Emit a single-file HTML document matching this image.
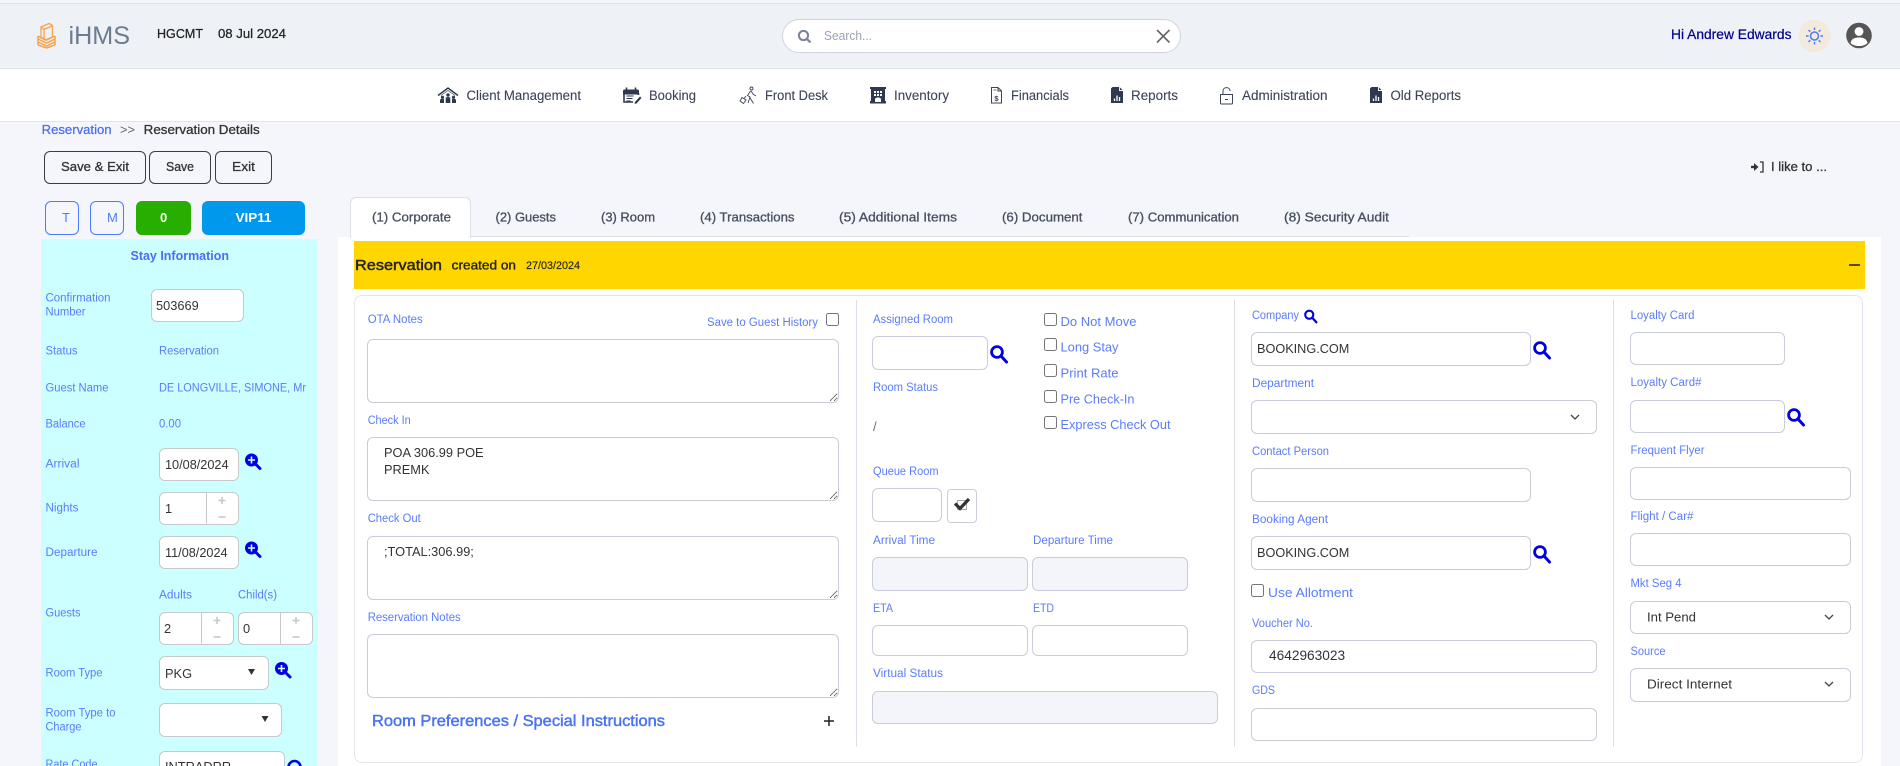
<!DOCTYPE html>
<html><head><meta charset="utf-8"><title>iHMS Reservation Details</title>
<style>
html,body{margin:0;padding:0;width:1900px;height:766px;overflow:hidden;background:#f5f6fb;font-family:"Liberation Sans",sans-serif}
#a{position:absolute;left:0;top:0;width:1900px;height:766px;overflow:hidden;background:#f5f6fb}
.b,input,textarea{position:absolute;box-sizing:border-box;margin:0}
input[type=text],textarea,.f{background:#fff;border:1px solid #c9ccda;border-radius:6px;font:12.8px "Liberation Sans",sans-serif;color:#333;outline:0}
input[type=text]{padding:0 4px}
textarea{padding:6px 16px;line-height:17px;overflow:hidden;resize:vertical}
.g{background:#f4f5fa!important}
.p{border-color:#c8c8c8!important}
.k{position:absolute;margin:0;width:13px;height:13px}
svg{position:absolute;left:0;top:0;pointer-events:none}
.l{font-size:11.5px;fill:#5a7cfb}
.c{font-size:13px;fill:#5a7cfb}
.n{font-size:13.5px;fill:#3c4458;stroke:#3c4458;stroke-width:.1px}
.tb{font-size:13px;fill:#474f60;stroke:#474f60;stroke-width:.3px}
.h{font-size:13px;fill:#222;stroke:#222;stroke-width:.25px}
.bt{font-size:13px;fill:#333;stroke:#333;stroke-width:.3px}
.w{font-size:13px;fill:#fff;font-weight:bold}
</style></head><body><div id="a">
<div class="b" style="left:0;top:3px;width:1900px;height:66px;background:#eef1f6;border-top:1px solid #e0e2e7;border-bottom:1px solid #e0e3e9"></div>
<div class="b" style="left:0;top:69px;width:1900px;height:53px;background:#fff;border-bottom:1px solid #e3e5ea"></div>
<div class="b" style="left:782px;top:19px;width:399px;height:34px;background:#fff;border:1px solid #cfd3e0;border-radius:17px"></div>

<div class="b" style="left:44px;top:151px;width:102px;height:33px;border:1px solid #3a3d45;border-radius:6px"></div>
<div class="b" style="left:149px;top:151px;width:62px;height:33px;border:1px solid #3a3d45;border-radius:6px"></div>
<div class="b" style="left:215px;top:151px;width:57px;height:33px;border:1px solid #3a3d45;border-radius:6px"></div>
<div class="b" style="left:45px;top:201px;width:34px;height:34px;border:1px solid #4a7cff;border-radius:6px"></div>
<div class="b" style="left:90px;top:201px;width:34px;height:34px;border:1px solid #4a7cff;border-radius:6px"></div>
<div class="b" style="left:136px;top:201px;width:55px;height:34px;background:#28ae00;border-radius:6px"></div>
<div class="b" style="left:202px;top:201px;width:103px;height:34px;background:#0098ec;border-radius:6px"></div>

<div class="b" style="left:41px;top:239px;width:277px;height:527px;background:#ccffff"></div>
<div class="b" style="left:338px;top:237px;width:1543px;height:529px;background:#fff"></div>
<div class="b" style="left:350px;top:236px;width:1059px;height:1px;background:#dcdfe6"></div>
<div class="b" style="left:350px;top:197px;width:121px;height:41px;background:#fff;border:1px solid #dcdfe6;border-bottom:0;border-radius:6px 6px 0 0"></div>
<div class="b" style="left:354px;top:241px;width:1511px;height:48px;background:#ffd600"></div>
<div class="b" style="left:354px;top:295px;width:1509px;height:468px;background:#fff;border:1px solid #e3e6ee;border-radius:8px"></div>
<div class="b" style="left:856px;top:300px;width:1px;height:447px;background:#dde0ea"></div>
<div class="b" style="left:1234px;top:300px;width:1px;height:447px;background:#dde0ea"></div>
<div class="b" style="left:1613px;top:300px;width:1px;height:447px;background:#dde0ea"></div>

<!-- left panel -->
<input type="text" class="p" value="503669" style="left:151px;top:289px;width:93px;height:33px">
<input type="text" class="p" value="10/08/2024" style="left:159px;top:448px;width:80px;height:33px;padding-left:5px;font-size:12.7px">
<input type="text" class="p" value="1" style="left:159px;top:492px;width:80px;height:33px;padding-left:5px">
<div class="b" style="left:206px;top:492px;width:1px;height:33px;background:#c8c8c8"></div>
<input type="text" class="p" value="11/08/2024" style="left:159px;top:536px;width:80px;height:33px;padding-left:5px;font-size:12.7px">
<input type="text" class="p" value="2" style="left:159px;top:612px;width:75px;height:33px">
<div class="b" style="left:201px;top:612px;width:1px;height:33px;background:#c8c8c8"></div>
<input type="text" class="p" value="0" style="left:238px;top:612px;width:75px;height:33px">
<div class="b" style="left:280px;top:612px;width:1px;height:33px;background:#c8c8c8"></div>
<input type="text" class="p" value="PKG" style="left:159px;top:656px;width:110px;height:34px;padding-left:5px">
<input type="text" class="p" style="left:159px;top:703px;width:123px;height:34px">
<input type="text" class="p" value="INTRADRR" style="left:159px;top:751px;width:126px;height:30px;padding-left:5px">

<!-- col 1 -->
<input class="k" type="checkbox" style="left:826px;top:313px">
<textarea style="left:367px;top:339px;width:472px;height:64px"></textarea>
<textarea style="left:367px;top:437px;width:472px;height:64px">POA 306.99 POE
PREMK</textarea>
<textarea style="left:367px;top:536px;width:472px;height:64px">;TOTAL:306.99;</textarea>
<textarea style="left:367px;top:634px;width:472px;height:64px"></textarea>

<!-- col 2 -->
<input type="text" style="left:872px;top:336px;width:116px;height:34px">
<input type="text" style="left:872px;top:488px;width:70px;height:34px">
<div class="b f" style="left:947px;top:489px;width:30px;height:34px;border-radius:4px"></div>
<input type="text" class="g" style="left:872px;top:557px;width:156px;height:34px">
<input type="text" class="g" style="left:1032px;top:557px;width:156px;height:34px">
<input type="text" style="left:872px;top:625px;width:156px;height:31px">
<input type="text" style="left:1032px;top:625px;width:156px;height:31px">
<input type="text" class="g" style="left:872px;top:691px;width:346px;height:33px">
<input class="k" type="checkbox" style="left:1044px;top:313px">
<input class="k" type="checkbox" style="left:1044px;top:338px">
<input class="k" type="checkbox" style="left:1044px;top:364px">
<input class="k" type="checkbox" style="left:1044px;top:390px">
<input class="k" type="checkbox" style="left:1044px;top:416px">

<!-- col 3 -->
<input type="text" value="BOOKING.COM" style="left:1251px;top:332px;width:280px;height:34px;font-size:12.7px;padding-left:5px">
<div class="b f" style="left:1251px;top:400px;width:346px;height:34px"></div>
<input type="text" style="left:1251px;top:468px;width:280px;height:34px">
<input type="text" value="BOOKING.COM" style="left:1251px;top:536px;width:280px;height:34px;font-size:12.7px;padding-left:5px">
<input class="k" type="checkbox" style="left:1251px;top:584px">
<input type="text" value="4642963023" style="left:1251px;top:640px;width:346px;height:33px;padding:0 0 2px 17px;font-size:13.7px">
<input type="text" style="left:1251px;top:708px;width:346px;height:33px">

<!-- col 4 -->
<input type="text" style="left:1630px;top:332px;width:155px;height:33px">
<input type="text" style="left:1630px;top:400px;width:155px;height:33px">
<input type="text" style="left:1630px;top:467px;width:221px;height:33px">
<input type="text" style="left:1630px;top:533px;width:221px;height:33px">
<div class="b f" style="left:1630px;top:601px;width:221px;height:33px"></div>
<div class="b f" style="left:1630px;top:668px;width:221px;height:34px"></div>

<svg width="1900" height="766" viewBox="0 0 1900 766" font-family="'Liberation Sans',sans-serif">
<defs>
<g id="sr"><circle cx="7" cy="7" r="5.4" fill="none" stroke="#0000e0" stroke-width="2.8"/><path d="M11 11l5.500 6" stroke="#0000e0" stroke-width="3" stroke-linecap="round"/></g>
<g id="sp"><circle cx="6.500" cy="6.500" r="6.500" fill="#0000e0"/><path d="M6.500 3v7M3 6.500h7" stroke="#ccffff" stroke-width="1.600"/><path d="M10.500 10.500l4.500 4.500" stroke="#0000e0" stroke-width="3" stroke-linecap="round"/></g>
<path id="ch" d="M-4-2l4 4 4-4" fill="none" stroke="#444" stroke-width="1.300"/>
<g id="st"><path d="M-3.500-8h7M0-11.500v7" stroke="#c6c8cc" stroke-width="1.600"/><path d="M-3.500 8.500h7" stroke="#c6c8cc" stroke-width="1.600"/></g>
<g id="rp"><path d="M1.500 0H8.500L12 3.500V16H0V1.500Z" fill="#2e3850"/><path d="M8.500 0V3.500H12" fill="none" stroke="#fff" stroke-width=".9"/><path d="M3.500 14V11.500M6 14V8.500M8.500 14V10" stroke="#fff" stroke-width="1.300"/></g>
</defs>

<!-- logo -->
<g fill="none" stroke="#f7a24d" stroke-width="1.300">
<path d="M41 27l8-3.500 3.500 2V37l-7 3-4.500-2Z"/><path d="M44 29.500l8-3.500M44 29.500V39M41 27l3 2.500"/>
<path d="M38 36l8.500 4 8.500-4M38 39l8.500 4 8.500-4M38 42l8.500 4 8.500-4M38 45l8.500 3 8.500-3M38 36v9M55 36v9" stroke-width="1.500"/>
</g>
<text x="68.500" y="44" font-size="25" fill="#6d7b8f" textLength="61.500" lengthAdjust="spacingAndGlyphs">iHMS</text>
<text class="h" x="157" y="38" textLength="46" lengthAdjust="spacingAndGlyphs">HGCMT</text>
<text class="h" x="218" y="38" textLength="68" lengthAdjust="spacingAndGlyphs">08 Jul 2024</text>

<!-- search -->
<circle cx="803.500" cy="35.500" r="4.600" fill="none" stroke="#7a829c" stroke-width="2"/><path d="M807 39l3.500 3.500" stroke="#7a829c" stroke-width="2.200"/>
<text x="824" y="40" font-size="13" fill="#9ba1b6" textLength="48" lengthAdjust="spacingAndGlyphs">Search...</text>
<path d="M1157 30l12.500 12.500M1169.500 30L1157 42.500" stroke="#666" stroke-width="1.600"/>

<!-- user -->
<text x="1671" y="39" font-size="13.500" fill="#00008b" stroke="#00008b" stroke-width=".2" textLength="120.500" lengthAdjust="spacingAndGlyphs">Hi Andrew Edwards</text>
<ellipse cx="1814.500" cy="36" rx="16" ry="16" fill="#f3e9dd"/>
<g transform="translate(1)">
<circle cx="1813.500" cy="36" r="4" fill="none" stroke="#4a7cff" stroke-width="1.500"/>
<path d="M1813.500 27.500v2.500M1813.500 42v2.500M1805 36h2.500M1819.500 36h2.500M1807.500 30l1.800 1.800M1817.700 40.200l1.800 1.800M1807.500 42l1.800-1.800M1817.700 31.800l1.800-1.800" stroke="#4a7cff" stroke-width="1.400"/>
</g>
<circle cx="1859" cy="35.500" r="12.800" fill="#555"/><circle cx="1859" cy="31.500" r="4.400" fill="#fff"/><path d="M1850.500 43c1-4.500 4.500-5.500 8.500-5.500s7.500 1 8.500 5.500c-2 2-5 3-8.500 3s-6.500-1-8.500-3Z" fill="#fff"/>

<!-- nav -->
<path d="M438 95.500L448 88l10 7.500" fill="none" stroke="#2e3850" stroke-width="1.500"/>
<path d="M441 95.500L448 90.500l7 5" fill="none" stroke="#2e3850" stroke-width=".6"/>
<g fill="#2e3850">
<circle cx="448" cy="95" r="1.700"/><circle cx="442.500" cy="97.300" r="1.600"/><circle cx="453.500" cy="97.300" r="1.600"/>
<path d="M445.700 103v-4.500c0-1 .8-1.500 2.300-1.500s2.300.5 2.300 1.500V103ZM440 103v-2.700c0-1 .8-1.500 2.500-1.500.5 0 1 .1 1.500.3V103ZM452 103V99.100c.5-.2 1-.3 1.500-.3 1.700 0 2.500.5 2.500 1.500V103Z"/>
</g>
<text class="n" x="466.500" y="100" textLength="114.500" lengthAdjust="spacingAndGlyphs">Client Management</text>
<path d="M623 91c0-1 .7-1.500 1.500-1.500h13c.8 0 1.500.5 1.500 1.500v3.500h-16Z" fill="#2e3850"/>
<path d="M626.500 87.500v3M635.500 87.500v3" stroke="#2e3850" stroke-width="1.600"/>
<path d="M624 93v9h9M638.500 93v2" fill="none" stroke="#2e3850" stroke-width="1.600"/>
<path d="M626.500 96h7M626.500 98.500h6M626.500 101h4" stroke="#2e3850" stroke-width="1.100"/>
<path d="M635 102l5-5.500 1.500 1.500-5 5.500-2 .3Z" fill="#2e3850"/>
<text class="n" x="649" y="100" textLength="47" lengthAdjust="spacingAndGlyphs">Booking</text>
<g fill="none" stroke="#3c4458" stroke-width=".9"><circle cx="751.500" cy="88.500" r="1.500"/><path d="M750.500 91l-3 4.500 2.500 1.500-2 6M751 91l2.500 3.500 2.500 1.500M749.500 97l4 6.500"/><path d="M742 97.500l4 2.500-2.500 3.500-3.500-2.500ZM746 96l-2 2.500"/></g>
<text class="n" x="765" y="100" textLength="63" lengthAdjust="spacingAndGlyphs">Front Desk</text>
<path d="M870 87h16v2h-1v12h1v2.500h-16V101h1V89h-1Z" fill="#2e3850"/>
<path d="M874 91h2v2h-2zM877 91h2v2h-2zM880 91h2v2h-2zM874 94h2v2h-2zM877 94h2v2h-2zM880 94h2v2h-2zM875 102v-2.500c0-1.500 1.500-2 3-2s3 .5 3 2V102Z" fill="#fff"/>
<text class="n" x="894" y="100" textLength="55" lengthAdjust="spacingAndGlyphs">Inventory</text>
<path d="M991.500 87.500h6.500l3.500 3.500v12h-10ZM998 87.500v3.500h3.500" fill="none" stroke="#3c4458"/>
<text x="996.500" y="101" font-size="7.500" font-weight="bold" text-anchor="middle" fill="#3c4458">$</text>
<path d="M993.500 90h3" stroke="#3c4458" stroke-width=".8"/>
<text class="n" x="1011" y="100" textLength="58" lengthAdjust="spacingAndGlyphs">Financials</text>
<use href="#rp" x="1111" y="87"/>
<text class="n" x="1131" y="100" textLength="47" lengthAdjust="spacingAndGlyphs">Reports</text>
<path d="M1220.500 94.500h12v8.500c0 .5-.5 1-1 1h-10c-.5 0-1-.5-1-1ZM1223 94.500v-3.500c0-4.500 7-4.500 7 0M1225 99.500h3" fill="none" stroke="#3c4458"/>
<text class="n" x="1242" y="100" textLength="85.500" lengthAdjust="spacingAndGlyphs">Administration</text>
<use href="#rp" x="1370" y="87"/>
<text class="n" x="1390.500" y="100" textLength="70.500" lengthAdjust="spacingAndGlyphs">Old Reports</text>

<!-- breadcrumb and buttons -->
<text x="41.600" y="134" font-size="13" fill="#4a6cf7" stroke="#4a6cf7" stroke-width=".25" textLength="70" lengthAdjust="spacingAndGlyphs">Reservation</text>
<text x="120" y="134" font-size="13" fill="#666" textLength="15" lengthAdjust="spacingAndGlyphs">&gt;&gt;</text>
<text class="bt" x="143.700" y="134" textLength="116" lengthAdjust="spacingAndGlyphs">Reservation Details</text>
<text class="bt" x="61" y="171" textLength="68" lengthAdjust="spacingAndGlyphs">Save &amp; Exit</text>
<text class="bt" x="166" y="171" textLength="28" lengthAdjust="spacingAndGlyphs">Save</text>
<text class="bt" x="232" y="171" textLength="23" lengthAdjust="spacingAndGlyphs">Exit</text>
<text x="62" y="222" font-size="13" fill="#4a7cff">T</text>
<text x="107" y="222" font-size="13" fill="#4a7cff">M</text>
<text class="w" x="160" y="222">0</text>
<text class="w" x="235.500" y="222" textLength="36" lengthAdjust="spacingAndGlyphs">VIP11</text>
<path d="M1751 167h4" stroke="#333" stroke-width="2.400"/><path d="M1754 163l4.500 4-4.500 4Z" fill="#333"/><path d="M1760 162h3v10h-3" fill="none" stroke="#333" stroke-width="1.300"/>
<text class="bt" x="1771" y="171" textLength="56" lengthAdjust="spacingAndGlyphs">I like to ...</text>

<!-- tabs -->
<text class="tb" x="372" y="221.500" textLength="79" lengthAdjust="spacingAndGlyphs">(1) Corporate</text>
<text class="tb" x="495.500" y="221.500" textLength="60.500" lengthAdjust="spacingAndGlyphs">(2) Guests</text>
<text class="tb" x="601" y="221.500" textLength="54" lengthAdjust="spacingAndGlyphs">(3) Room</text>
<text class="tb" x="700" y="221.500" textLength="94.500" lengthAdjust="spacingAndGlyphs">(4) Transactions</text>
<text class="tb" x="839" y="221.500" textLength="118" lengthAdjust="spacingAndGlyphs">(5) Additional Items</text>
<text class="tb" x="1002" y="221.500" textLength="80.500" lengthAdjust="spacingAndGlyphs">(6) Document</text>
<text class="tb" x="1128" y="221.500" textLength="111" lengthAdjust="spacingAndGlyphs">(7) Communication</text>
<text class="tb" x="1284" y="221.500" textLength="105" lengthAdjust="spacingAndGlyphs">(8) Security Audit</text>

<!-- yellow -->
<text x="355" y="270" font-size="15" fill="#232323" stroke="#232323" stroke-width=".45" textLength="87" lengthAdjust="spacingAndGlyphs">Reservation</text>
<text x="451.700" y="269.500" font-size="12.500" fill="#232323" stroke="#232323" stroke-width=".35" textLength="64.300" lengthAdjust="spacingAndGlyphs">created on</text>
<text x="526" y="269" font-size="11" fill="#232323" stroke="#232323" stroke-width=".15" textLength="54" lengthAdjust="spacingAndGlyphs">27/03/2024</text>
<path d="M1849 265h11" stroke="#222" stroke-width="1.500"/>

<!-- left labels -->
<text x="130.500" y="260" font-size="12.500" fill="#4a6cf7" font-weight="bold" textLength="98.500" lengthAdjust="spacingAndGlyphs">Stay Information</text>
<text class="l" x="45.500" y="301.500" textLength="65" lengthAdjust="spacingAndGlyphs">Confirmation</text>
<text class="l" x="45.500" y="315.500" textLength="40" lengthAdjust="spacingAndGlyphs">Number</text>
<text class="l" x="45.500" y="354.500" textLength="32" lengthAdjust="spacingAndGlyphs">Status</text>
<text class="l" x="159" y="354.500" textLength="60" lengthAdjust="spacingAndGlyphs">Reservation</text>
<text class="l" x="45.500" y="391.500" textLength="63" lengthAdjust="spacingAndGlyphs">Guest Name</text>
<text class="l" x="159" y="391.500" textLength="147" lengthAdjust="spacingAndGlyphs">DE LONGVILLE, SIMONE, Mr</text>
<text class="l" x="45.500" y="427.500" textLength="40" lengthAdjust="spacingAndGlyphs">Balance</text>
<text class="l" x="159" y="427.500" textLength="22" lengthAdjust="spacingAndGlyphs">0.00</text>
<text class="l" x="45.500" y="467.500" textLength="34" lengthAdjust="spacingAndGlyphs">Arrival</text>
<text class="l" x="45.500" y="511.700" textLength="33" lengthAdjust="spacingAndGlyphs">Nights</text>
<text class="l" x="45.500" y="556" textLength="52" lengthAdjust="spacingAndGlyphs">Departure</text>
<text class="l" x="159" y="598.500" textLength="33" lengthAdjust="spacingAndGlyphs">Adults</text>
<text class="l" x="238" y="598.500" textLength="39" lengthAdjust="spacingAndGlyphs">Child(s)</text>
<text class="l" x="45.500" y="616.500" textLength="35" lengthAdjust="spacingAndGlyphs">Guests</text>
<text class="l" x="45.500" y="676.500" textLength="57" lengthAdjust="spacingAndGlyphs">Room Type</text>
<text class="l" x="45.500" y="716.500" textLength="70" lengthAdjust="spacingAndGlyphs">Room Type to</text>
<text class="l" x="45.500" y="730.500" textLength="36" lengthAdjust="spacingAndGlyphs">Charge</text>
<text class="l" x="45.500" y="768" textLength="52" lengthAdjust="spacingAndGlyphs">Rate Code</text>
<use href="#sp" x="245" y="453.500"/><use href="#sp" x="245" y="541.500"/><use href="#sp" x="275" y="662"/>
<circle cx="294.500" cy="767" r="6" fill="none" stroke="#0000e0" stroke-width="2.600"/>
<use href="#st" x="222" y="508.500"/><use href="#st" x="217" y="628.500"/><use href="#st" x="296" y="628.500"/>
<path d="M248 669h7l-3.500 6Z" fill="#333"/>
<path d="M261.500 716h7l-3.500 6Z" fill="#333"/>

<!-- col 1 labels -->
<text class="l" x="367.700" y="323" textLength="55" lengthAdjust="spacingAndGlyphs">OTA Notes</text>
<text class="l" x="707" y="326" textLength="111" lengthAdjust="spacingAndGlyphs">Save to Guest History</text>
<text class="l" x="367.700" y="424" textLength="43" lengthAdjust="spacingAndGlyphs">Check In</text>
<text class="l" x="367.700" y="522" textLength="53" lengthAdjust="spacingAndGlyphs">Check Out</text>
<text class="l" x="367.700" y="621" textLength="93" lengthAdjust="spacingAndGlyphs">Reservation Notes</text>
<text x="372" y="726" font-size="16" fill="#4a72f5" stroke="#4a72f5" stroke-width=".45" textLength="293" lengthAdjust="spacingAndGlyphs">Room Preferences / Special Instructions</text>
<path d="M824 721h10M829 716v10" stroke="#222" stroke-width="1.500"/>

<!-- col 2 labels -->
<text class="l" x="873" y="323" textLength="80" lengthAdjust="spacingAndGlyphs">Assigned Room</text>
<use href="#sr" x="990" y="345"/>
<text class="l" x="873" y="391" textLength="65" lengthAdjust="spacingAndGlyphs">Room Status</text>
<text x="873" y="431" font-size="13" fill="#6b6b7b">/</text>
<text class="l" x="873" y="475" textLength="65.500" lengthAdjust="spacingAndGlyphs">Queue Room</text>
<path d="M957.500 500.500h9v9h-9Z" fill="none" stroke="#888" stroke-width=".7"/>
<path d="M955 503.500l5 5 9-9.500" fill="none" stroke="#333" stroke-width="3.200"/>
<text class="l" x="873" y="544" textLength="62" lengthAdjust="spacingAndGlyphs">Arrival Time</text>
<text class="l" x="1033" y="544" textLength="80" lengthAdjust="spacingAndGlyphs">Departure Time</text>
<text class="l" x="873" y="612" textLength="20" lengthAdjust="spacingAndGlyphs">ETA</text>
<text class="l" x="1033" y="612" textLength="21" lengthAdjust="spacingAndGlyphs">ETD</text>
<text class="l" x="873" y="677" textLength="70" lengthAdjust="spacingAndGlyphs">Virtual Status</text>
<text class="c" x="1060.500" y="326" textLength="76" lengthAdjust="spacingAndGlyphs">Do Not Move</text>
<text class="c" x="1060.500" y="351.500" textLength="58" lengthAdjust="spacingAndGlyphs">Long Stay</text>
<text class="c" x="1060.500" y="377.500" textLength="58" lengthAdjust="spacingAndGlyphs">Print Rate</text>
<text class="c" x="1060.500" y="403.500" textLength="74" lengthAdjust="spacingAndGlyphs">Pre Check-In</text>
<text class="c" x="1060.500" y="429" textLength="110" lengthAdjust="spacingAndGlyphs">Express Check Out</text>

<!-- col 3 labels -->
<text class="l" x="1252" y="319" textLength="47" lengthAdjust="spacingAndGlyphs">Company</text>
<g transform="translate(1304 309.500) scale(.75)"><use href="#sr"/></g>
<use href="#sr" x="1533" y="341"/>
<text class="l" x="1252" y="387" textLength="62" lengthAdjust="spacingAndGlyphs">Department</text>
<use href="#ch" x="1575" y="417"/>
<text class="l" x="1252" y="455" textLength="77" lengthAdjust="spacingAndGlyphs">Contact Person</text>
<text class="l" x="1252" y="523" textLength="76" lengthAdjust="spacingAndGlyphs">Booking Agent</text>
<use href="#sr" x="1533" y="545"/>
<text class="c" x="1268" y="597" textLength="85" lengthAdjust="spacingAndGlyphs">Use Allotment</text>
<text class="l" x="1252" y="627" textLength="61" lengthAdjust="spacingAndGlyphs">Voucher No.</text>
<text class="l" x="1252" y="694" textLength="23" lengthAdjust="spacingAndGlyphs">GDS</text>

<!-- col 4 labels -->
<text class="l" x="1630.500" y="319" textLength="64" lengthAdjust="spacingAndGlyphs">Loyalty Card</text>
<text class="l" x="1630.500" y="386" textLength="71" lengthAdjust="spacingAndGlyphs">Loyalty Card#</text>
<use href="#sr" x="1787" y="408"/>
<text class="l" x="1630.500" y="454" textLength="74" lengthAdjust="spacingAndGlyphs">Frequent Flyer</text>
<text class="l" x="1630.500" y="520" textLength="63" lengthAdjust="spacingAndGlyphs">Flight / Car#</text>
<text class="l" x="1630.500" y="587" textLength="51" lengthAdjust="spacingAndGlyphs">Mkt Seg 4</text>
<text x="1647" y="621.500" font-size="13" fill="#333" textLength="49" lengthAdjust="spacingAndGlyphs">Int Pend</text>
<use href="#ch" x="1829" y="617"/>
<text class="l" x="1630.500" y="655" textLength="35" lengthAdjust="spacingAndGlyphs">Source</text>
<text x="1647" y="688.500" font-size="13" fill="#333" textLength="85" lengthAdjust="spacingAndGlyphs">Direct Internet</text>
<use href="#ch" x="1829" y="684"/>
</svg>
</div></body></html>
